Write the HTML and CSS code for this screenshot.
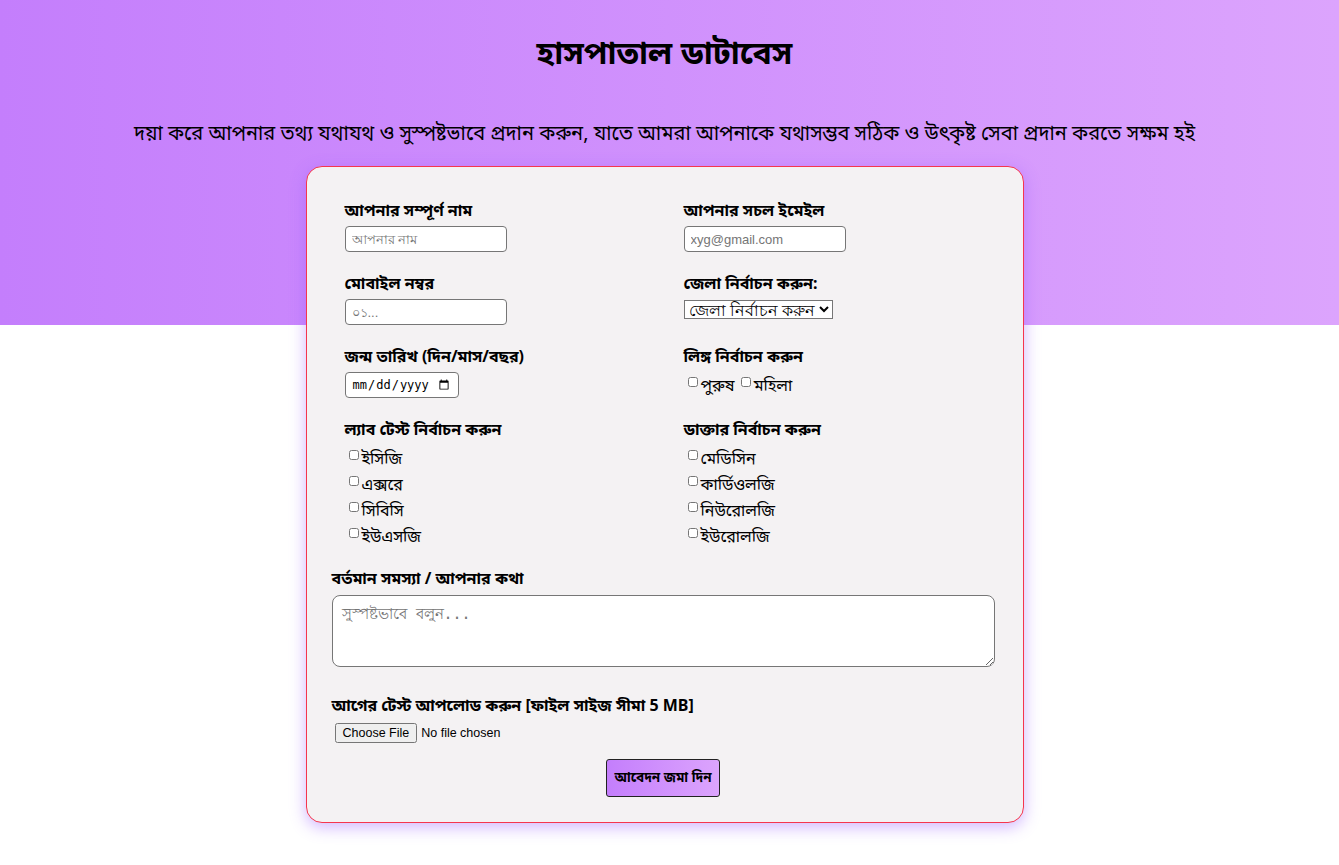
FILE: index.html
```html
<!DOCTYPE html>
<html lang="bn">
<head>
<meta charset="utf-8">
<title>হাসপাতাল ডাটাবেস</title>
<link rel="stylesheet" href="styles.css">
</head>
<body>
<div class="page">
  <header class="hero">
    <h1 class="title">হাসপাতাল ডাটাবেস</h1>
    <p class="subtitle">দয়া করে আপনার তথ্য যথাযথ ও সুস্পষ্টভাবে প্রদান করুন, যাতে আমরা আপনাকে যথাসম্ভব সঠিক ও উৎকৃষ্ট সেবা প্রদান করতে সক্ষম হই</p>
  </header>
  <form class="card">
    <div class="grid">
      <div class="field">
        <label class="label">আপনার সম্পূর্ণ নাম</label>
        <input class="text-input" type="text" placeholder="আপনার নাম">
      </div>
      <div class="field">
        <label class="label">আপনার সচল ইমেইল</label>
        <input class="text-input" type="email" placeholder="xyg@gmail.com">
      </div>
      <div class="field">
        <label class="label">মোবাইল নম্বর</label>
        <input class="text-input" type="text" placeholder="০১...">
      </div>
      <div class="field">
        <label class="label">জেলা নির্বাচন করুন:</label>
        <select class="select"><option>জেলা নির্বাচন করুন</option></select>
      </div>
      <div class="field">
        <label class="label">জন্ম তারিখ (দিন/মাস/বছর)</label>
        <input class="date-input" type="date">
      </div>
      <div class="field">
        <label class="label">লিঙ্গ নির্বাচন করুন</label>
        <div class="inline-checks">
          <label class="check"><input type="checkbox">পুরুষ</label>
          <label class="check"><input type="checkbox">মহিলা</label>
        </div>
      </div>
      <div class="field">
        <label class="label">ল্যাব টেস্ট নির্বাচন করুন</label>
        <div class="check-list">
          <label class="check"><input type="checkbox">ইসিজি</label>
          <label class="check"><input type="checkbox">এক্সরে</label>
          <label class="check"><input type="checkbox">সিবিসি</label>
          <label class="check"><input type="checkbox">ইউএসজি</label>
        </div>
      </div>
      <div class="field">
        <label class="label">ডাক্তার নির্বাচন করুন</label>
        <div class="check-list">
          <label class="check"><input type="checkbox">মেডিসিন</label>
          <label class="check"><input type="checkbox">কার্ডিওলজি</label>
          <label class="check"><input type="checkbox">নিউরোলজি</label>
          <label class="check"><input type="checkbox">ইউরোলজি</label>
        </div>
      </div>
    </div>
    <div class="wide">
      <label class="label">বর্তমান সমস্যা / আপনার কথা</label>
      <textarea class="textarea" placeholder="সুস্পষ্টভাবে বলুন..."></textarea>
    </div>
    <div class="wide upload">
      <label class="label">আগের টেস্ট আপলোড করুন [ফাইল সাইজ সীমা 5 MB]</label>
      <input class="file" type="file">
    </div>
    <div class="actions">
      <button class="submit" type="button">আবেদন জমা দিন</button>
    </div>
  </form>
</div>
</body>
</html>
```

FILE: styles.css
```css
html, body {
  margin: 0;
  padding: 0;
}

body {
  font-family: "Noto Sans", "Noto Sans Bengali", "DejaVu Sans", sans-serif;
  color: #000;
  background: #fff;
}

.page {
  background: linear-gradient(to right, #c47efc, #dca4fd) top left / 100% 325px no-repeat;
  padding: 0 10px 43px 0;
}

.hero {
  text-align: center;
  padding-top: 30px;
}

.title {
  margin: 0;
  font-size: 32px;
  line-height: 44px;
  font-weight: 700;
}

.subtitle {
  margin: 45px 0 0;
  font-size: 20px;
  line-height: 28px;
}

.card {
  width: 663px;
  margin: 19px auto 0;
  background: #f4f2f3;
  border: 1px solid #f5364e;
  border-radius: 16px;
  box-shadow: 0 4px 16px rgba(150, 90, 255, 0.45);
  padding: 33px 28px 25px 25px;
}

.grid {
  display: grid;
  grid-template-columns: 339px 1fr;
  padding-left: 13px;
  row-gap: 21px;
}

.field {
  display: flex;
  flex-direction: column;
  align-items: flex-start;
}

.label {
  font-weight: 700;
  font-size: 16px;
  line-height: 20px;
  margin-bottom: 6px;
}

.text-input {
  width: 162px;
  height: 26px;
  box-sizing: border-box;
  border: 1px solid #767676;
  border-radius: 4px;
  background: #fff;
  padding: 0 6px;
  font-size: 13px;
  font-family: "Liberation Sans", "Noto Sans", sans-serif;
}

.text-input::placeholder {
  color: #757575;
}

.select {
  font-size: 15.6px;
  height: 19px;
  padding: 0;
  border: 1px solid #767676;
  border-radius: 0;
  background: #fff;
  margin-top: 1px;
}

.date-input {
  width: 114px;
  height: 26px;
  box-sizing: border-box;
  border: 1px solid #767676;
  border-radius: 4px;
  background: #fff;
  font-size: 12px;
  padding: 0 6px;
}

.inline-checks {
  display: flex;
  gap: 6px;
  padding-left: 4px;
}

.check-list {
  display: flex;
  flex-direction: column;
  padding-left: 4px;
}

.check {
  display: flex;
  align-items: center;
  font-size: 16px;
  line-height: 26px;
}

.check input {
  margin: 0 3px 0 0;
  width: 10px;
  height: 10px;
  position: relative;
  top: -3px;
}

.wide {
  display: flex;
  flex-direction: column;
  margin-top: 19px;
}

.wide .label {
  margin-bottom: 7px;
}

.textarea {
  height: 72px;
  box-sizing: border-box;
  border: 1px solid #767676;
  border-radius: 8px;
  background: #fff;
  padding: 6px 9px;
  font-size: 15px;
  resize: vertical;
}

.upload {
  margin-top: 28px;
}

.upload .label {
  margin-bottom: 8px;
}

.file {
  font-family: "Liberation Sans", sans-serif;
  font-size: 12.5px;
  margin-left: 3px;
}

.actions {
  display: flex;
  justify-content: center;
  margin-top: 16px;
}

.submit {
  width: 114px;
  height: 38px;
  padding: 0;
  white-space: nowrap;
  border: 1px solid #222;
  border-radius: 3px;
  background: linear-gradient(to right, #c47efc, #dca4fd);
  font-weight: 700;
  font-size: 13.5px;
  font-family: inherit;
  color: #000;
}
```
